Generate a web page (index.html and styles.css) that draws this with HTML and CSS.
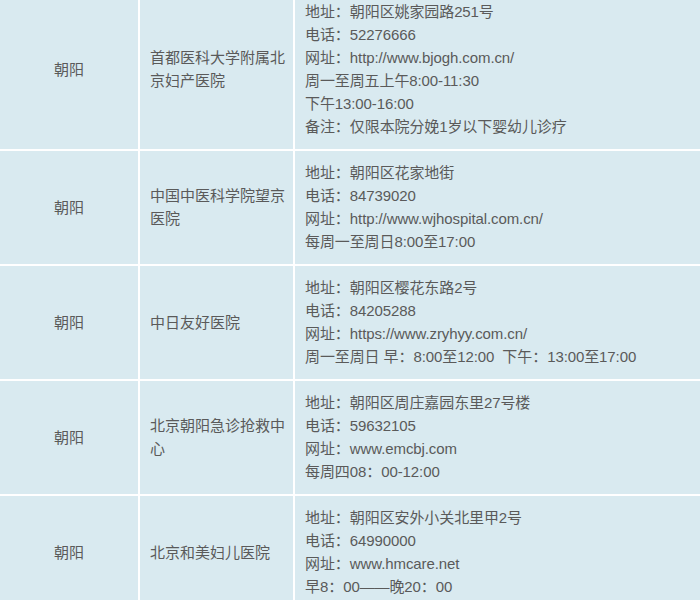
FILE: index.html
```html
<!DOCTYPE html>
<html lang="zh-CN">
<head>
<meta charset="utf-8">
<title>朝阳医院</title>
<link rel="stylesheet" href="styles.css">
</head>
<body>
<div class="table">
  <div class="row">
    <div class="cell area">朝阳</div>
    <div class="cell name">首都医科大学附属北京妇产医院</div>
    <div class="cell info">
      <p>地址<span class="c">：</span>朝阳区姚家园路251号</p>
      <p>电话<span class="c">：</span>52276666</p>
      <p>网址<span class="c">：</span>http://www.bjogh.com.cn/</p>
      <p>周一至周五上午8:00-11:30</p>
      <p>下午13:00-16:00</p>
      <p>备注<span class="c">：</span>仅限本院分娩1岁以下婴幼儿诊疗</p>
    </div>
  </div>
  <div class="row">
    <div class="cell area">朝阳</div>
    <div class="cell name">中国中医科学院望京医院</div>
    <div class="cell info">
      <p>地址<span class="c">：</span>朝阳区花家地街</p>
      <p>电话<span class="c">：</span>84739020</p>
      <p>网址<span class="c">：</span>http://www.wjhospital.com.cn/</p>
      <p>每周一至周日8:00至17:00</p>
    </div>
  </div>
  <div class="row">
    <div class="cell area">朝阳</div>
    <div class="cell name">中日友好医院</div>
    <div class="cell info">
      <p>地址<span class="c">：</span>朝阳区樱花东路2号</p>
      <p>电话<span class="c">：</span>84205288</p>
      <p>网址<span class="c">：</span>https://www.zryhyy.com.cn/</p>
      <p>周一至周日 早<span class="c">：</span>8:00至12:00&nbsp; 下午<span class="c">：</span>13:00至17:00</p>
    </div>
  </div>
  <div class="row">
    <div class="cell area">朝阳</div>
    <div class="cell name">北京朝阳急诊抢救中心</div>
    <div class="cell info">
      <p>地址<span class="c">：</span>朝阳区周庄嘉园东里27号楼</p>
      <p>电话<span class="c">：</span>59632105</p>
      <p>网址<span class="c">：</span>www.emcbj.com</p>
      <p>每周四08<span class="c">：</span>00-12:00</p>
    </div>
  </div>
  <div class="row">
    <div class="cell area">朝阳</div>
    <div class="cell name">北京和美妇儿医院</div>
    <div class="cell info">
      <p>地址<span class="c">：</span>朝阳区安外小关北里甲2号</p>
      <p>电话<span class="c">：</span>64990000</p>
      <p>网址<span class="c">：</span>www.hmcare.net</p>
      <p>早8<span class="c">：</span>00——晚20<span class="c">：</span>00</p>
    </div>
  </div>
</div>
</body>
</html>
```

FILE: styles.css
```css
html, body {
  margin: 0;
  padding: 0;
  background: #d9eaf0;
  overflow: hidden;
}
body {
  font-family: "Liberation Sans", "Noto Sans CJK SC", sans-serif;
  font-size: 15px;
  line-height: 23px;
  color: #5a5a5a;
}
.table {
  margin-top: -10px;
  display: flex;
  flex-direction: column;
  gap: 2px;
  background: #fff;
}
.row {
  display: grid;
  grid-template-columns: 138px 153px 1fr;
  gap: 2px;
}
.cell {
  background: #d9eaf0;
  padding: 10px 10px 11px;
}
.area {
  display: flex;
  align-items: center;
  justify-content: center;
}
.name {
  display: flex;
  align-items: center;
  padding-right: 4px;
}
.info p {
  margin: 0;
  white-space: nowrap;
  letter-spacing: -0.1px;
}
.c {
  font-family: "Noto Sans CJK TC", "Noto Sans CJK SC", sans-serif;
  line-height: 1;
  letter-spacing: 0;
}
```
